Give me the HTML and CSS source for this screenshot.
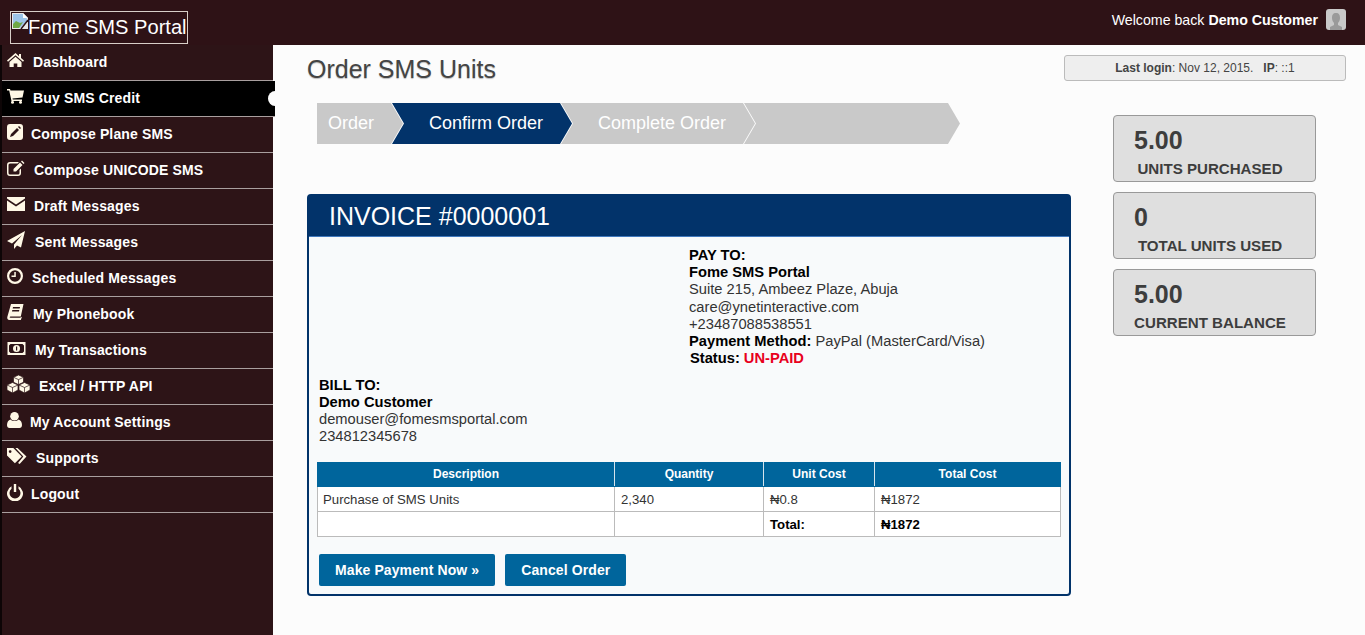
FILE: index.html
```html
<!DOCTYPE html>
<html lang="en">
<head>
    <meta charset="UTF-8">
    <title>Fome SMS Portal - Order SMS Units</title>
    <link rel="stylesheet" href="styles.css">
</head>
<body>
    <header class="topbar">
        <a class="logo" href="#">
            <svg class="broken-img" width="16" height="16" viewBox="0 0 16 16">
                <path d="M0 0h11l5 5v11H0z" fill="#e8e8e8"/>
                <path d="M1 1h9.500l4.500 4.500V8L8 15H1z" fill="#9cc4e8"/>
                <path d="M1 15v-4l3-3 4 2 3-1-4 6z" fill="#6fa845"/>
                <path d="M11 0v5h5z" fill="#fff"/>
                <path d="M16 7 9 16" stroke="#2e1216" stroke-width="1.500"/>
            </svg>
            <span>Fome SMS Portal</span>
        </a>
        <div class="welcome">
            <span>Welcome back <b>Demo Customer</b></span>
            <svg class="avatar" width="20" height="21" viewBox="0 0 20 21">
                <rect width="20" height="21" rx="3" fill="#c9c9c9"/>
                <path d="M10 4c-3 0-4 2-4 5 0 2 1 4 2 5v2l-4 2v3h12v-3l-4-2v-2c1-1 2-3 2-5 0-3-1-5-4-5z" fill="#9a9a9a"/>
            </svg>
        </div>
    </header>

    <div class="layout">
        <nav class="sidebar">
            <a class="nav-item" href="#">
                <svg width="17" height="16" viewBox="0 0 17 16"><path d="M8.500 1 0 8.500l1 1.200 7.500-6.500 7.500 6.500 1-1.200-3-2.600V2h-2v2.200z"/><path d="M8.500 4.700 2.500 10v5h4.200v-3.500h3.600V15h4.200v-5z"/></svg>
                <span>Dashboard</span>
            </a>
            <a class="nav-item active" href="#">
                <svg width="17" height="16" viewBox="0 0 17 16"><path d="M0 1h3l.5 1.500H17l-1.500 7-10 1 .3 1H15v1.500H4.500L2.200 2.500H0z"/><circle cx="5.500" cy="14.300" r="1.500"/><circle cx="13.500" cy="14.300" r="1.500"/></svg>
                <span>Buy SMS Credit</span>
            </a>
            <a class="nav-item tight" href="#">
                <svg width="16" height="16" viewBox="0 0 16 16"><path fill-rule="evenodd" d="M3 0h10a3 3 0 0 1 3 3v10a3 3 0 0 1-3 3H3a3 3 0 0 1-3-3V3a3 3 0 0 1 3-3zM10 4l-6 6-1 3 3-1 6-6zM11 3l2 2 1-1-2-2z"/></svg>
                <span>Compose Plane SMS</span>
            </a>
            <a class="nav-item" href="#">
                <svg width="18" height="16" viewBox="0 0 18 16"><path d="M3 2h9l-1.500 1.500H3A1.500 1.500 0 0 0 1.500 5v8A1.500 1.500 0 0 0 3 14.500h8a1.500 1.500 0 0 0 1.500-1.500v-3L14 8.500V13a3 3 0 0 1-3 3H3a3 3 0 0 1-3-3V5a3 3 0 0 1 3-3z"/><path d="M13 2.500 15.500 5 9 11.500H6.500V9zM14 1.500l1-1 2.500 2.500-1 1z"/></svg>
                <span>Compose UNICODE SMS</span>
            </a>
            <a class="nav-item" href="#">
                <svg width="18" height="14" viewBox="0 0 18 14"><path d="M0 0h18v1.500L9 7.500 0 1.500z"/><path d="M0 3.500 9 9.500l9-6V14H0z"/></svg>
                <span>Draft Messages</span>
            </a>
            <a class="nav-item" href="#">
                <svg width="19" height="18" viewBox="0 0 19 18"><path d="M18 0 0 10l5 2.500L15 4 7 13.500V18l3-3.500 4 2z"/></svg>
                <span>Sent Messages</span>
            </a>
            <a class="nav-item" href="#">
                <svg width="16" height="16" viewBox="0 0 16 16"><path fill-rule="evenodd" d="M8 0a8 8 0 1 1 0 16A8 8 0 0 1 8 0zm0 2.200a5.800 5.800 0 1 0 0 11.600A5.800 5.800 0 0 0 8 2.200z"/><path d="M7.300 4h1.500v5H4.500V7.500h2.800z"/></svg>
                <span>Scheduled Messages</span>
            </a>
            <a class="nav-item" href="#">
                <svg width="17" height="16" viewBox="0 0 17 16"><path fill-rule="evenodd" d="M4 0h12.500l-2.700 12.500H3.500c-1 0-1.300 1.300 0 1.300h10l.5-1 .8.400-1 2.800H2.500C.5 16 0 14.500.3 13zM6 3l-.3 1.500h7L13 3zm-.7 3L5 7.500h7l.3-1.500z"/></svg>
                <span>My Phonebook</span>
            </a>
            <a class="nav-item" href="#">
                <svg width="19" height="13" viewBox="0 0 18 13"><path fill-rule="evenodd" d="M0 0h18v13H0zM3 2 1.500 3.500v6L3 11h12l1.500-1.500v-6L15 2z"/><circle cx="9" cy="6.500" r="3.500"/><path d="M8.500 4.500h1.200v4H8.500z" fill="#2d1417"/></svg>
                <span>My Transactions</span>
            </a>
            <a class="nav-item" href="#">
                <svg width="23" height="18" viewBox="0 0 23 18" stroke="#2d1417" stroke-width="0.700">
                    <path d="M11.500 0 16.500 2.300v5l-5 2.300-5-2.300v-5z"/><path d="M6.500 2.300l5 2.300 5-2.300M11.500 4.600v5" fill="none"/>
                    <path d="M5.500 7.500 11 10v5l-5.500 3-5.500-3v-5z"/><path d="M0 10l5.500 2.500L11 10M5.500 12.500V18" fill="none"/>
                    <path d="M17.500 7.500 23 10v5l-5.500 3-5.500-3v-5z"/><path d="M12 10l5.500 2.500L23 10M17.500 12.500V18" fill="none"/>
                </svg>
                <span>Excel / HTTP API</span>
            </a>
            <a class="nav-item tight" href="#">
                <svg width="15" height="16" viewBox="0 0 15 16"><circle cx="7.500" cy="4.300" r="4.300"/><path d="M3.500 7.500c1 1 2.500 1.500 4 1.500s3-.5 4-1.500c2 .5 3.500 2.500 3.500 5.500 0 2-1 3-2.500 3h-10C1 16 0 15 0 13c0-3 1.500-5 3.500-5.500z"/></svg>
                <span>My Account Settings</span>
            </a>
            <a class="nav-item" href="#">
                <svg width="20" height="16" viewBox="0 0 19 15"><path fill-rule="evenodd" d="M0 0h6l8 8-6.500 6.500L0 7zM3 2a1.300 1.300 0 1 0 0 2.600A1.300 1.300 0 0 0 3 2z"/><path d="M8 0h2l8.500 8-6.500 7-1.500-.8L15.500 8z"/></svg>
                <span>Supports</span>
            </a>
            <a class="nav-item tight" href="#">
                <svg width="16" height="17" viewBox="0 0 16 17"><path d="M6.800 0h2.400v8H6.800z"/><path d="M4.500 2.200v2.600a5.500 5.500 0 1 0 7 0V2.200a8 8 0 1 1-7 0z"/></svg>
                <span>Logout</span>
            </a>
        </nav>

        <main class="main">
            <div class="head-row">
                <h1>Order SMS Units</h1>
                <div class="last-login"><b>Last login</b>: Nov 12, 2015. &nbsp; <b>IP</b>: ::1</div>
            </div>

            <div class="content-row">
                <div class="content">
                    <ol class="steps">
                        <li class="step step-first">Order</li>
                        <li class="step step-current">Confirm Order</li>
                        <li class="step step-third">Complete Order</li>
                        <li class="step step-last"></li>
                    </ol>

                    <section class="invoice">
                        <h2 class="invoice-title">INVOICE #0000001</h2>
                        <div class="invoice-body">
                            <div class="pay-to">
                                <b>PAY TO:</b><br>
                                <b>Fome SMS Portal</b><br>
                                Suite 215, Ambeez Plaze, Abuja<br>
                                care@ynetinteractive.com<br>
                                +23487088538551<br>
                                <b>Payment Method:</b> PayPal (MasterCard/Visa)<br>
                                <b class="status">Status: <span class="unpaid">UN-PAID</span></b>
                            </div>
                            <div class="bill-to">
                                <b>BILL TO:</b><br>
                                <b>Demo Customer</b><br>
                                demouser@fomesmsportal.com<br>
                                234812345678
                            </div>

                            <table class="items">
                                <thead>
                                    <tr>
                                        <th class="col-desc">Description</th>
                                        <th class="col-qty">Quantity</th>
                                        <th class="col-unit">Unit Cost</th>
                                        <th>Total Cost</th>
                                    </tr>
                                </thead>
                                <tbody>
                                    <tr>
                                        <td>Purchase of SMS Units</td>
                                        <td>2,340</td>
                                        <td>₦0.8</td>
                                        <td>₦1872</td>
                                    </tr>
                                    <tr>
                                        <td></td>
                                        <td></td>
                                        <td><b>Total:</b></td>
                                        <td><b>₦1872</b></td>
                                    </tr>
                                </tbody>
                            </table>

                            <div class="actions">
                                <a class="btn" href="#">Make Payment Now »</a>
                                <a class="btn" href="#">Cancel Order</a>
                            </div>
                        </div>
                    </section>
                </div>

                <aside class="stats">
                    <div class="stat">
                        <div class="stat-num">5.00</div>
                        <div class="stat-label">UNITS PURCHASED</div>
                    </div>
                    <div class="stat">
                        <div class="stat-num">0</div>
                        <div class="stat-label">TOTAL UNITS USED</div>
                    </div>
                    <div class="stat">
                        <div class="stat-num">5.00</div>
                        <div class="stat-label">CURRENT BALANCE</div>
                    </div>
                </aside>
            </div>
        </main>
    </div>
</body>
</html>
```

FILE: styles.css
```css
* {
    box-sizing: border-box;
}
html, body {
    height: 100%;
}
body {
    margin: 0;
    font-family: "Liberation Sans", Arial, sans-serif;
    background-color: #fcfcfc;
    color: #222;
    overflow: hidden;
}
a {
    text-decoration: none;
}

/* top bar */
.topbar {
    height: 45px;
    background-color: #2e1216;
    display: flex;
    justify-content: space-between;
    align-items: flex-start;
    padding: 11px 19px 0 10px;
}
.logo {
    display: flex;
    width: 178px;
    height: 33px;
    border: 1px solid #d8cfc8;
    color: #fff;
    font-size: 20.100px;
    line-height: 31px;
    white-space: nowrap;
}
.broken-img {
    flex: none;
    margin: 1px 0 0 1px;
}
.welcome {
    display: flex;
    align-items: center;
    gap: 8px;
    margin-top: -2px;
    color: #fff;
    font-size: 14.200px;
}

/* side menu */
.layout {
    display: flex;
    height: calc(100% - 45px);
}
.sidebar {
    flex: none;
    width: 273px;
    background-color: #2d1417;
    border-left: 2px solid #0d0506;
}
.nav-item {
    position: relative;
    display: flex;
    align-items: center;
    height: 36px;
    padding: 0 0 2px 5px;
    border-bottom: 1px solid #a99f9f;
    color: #fff;
    font-size: 14px;
    font-weight: bold;
    letter-spacing: 0.15px;
}
.nav-item svg {
    flex: none;
    margin-right: 9px;
    margin-top: -3px;
    fill: #fff8e6;
}
.nav-item.tight svg {
    margin-right: 8px;
}
.nav-item.active {
    margin-right: -2px;
    background-color: #000;
}
.nav-item.active::after {
    content: "";
    position: absolute;
    right: 0;
    top: 10px;
    width: 7px;
    height: 15px;
    background-color: #fcfcfc;
    border-radius: 100% 0 0 100% / 50% 0 0 50%;
}

/* main area */
.main {
    flex: 1;
    padding: 10px 19px 0 34px;
}
.head-row {
    display: flex;
    justify-content: space-between;
    align-items: flex-start;
    height: 48px;
}
h1 {
    margin: 0;
    font-size: 25px;
    font-weight: normal;
    line-height: 29px;
    color: #444;
    text-shadow: 0 1px 1px #bbb;
}
.last-login {
    width: 282px;
    height: 26px;
    background-color: #eee;
    border: 1px solid #bbb;
    border-radius: 3px;
    color: #444;
    font-size: 12px;
    line-height: 24px;
    text-align: center;
}
.content-row {
    display: flex;
    justify-content: space-between;
    padding-right: 30px;
}
.content {
    width: 764px;
}

/* order steps */
.steps {
    display: flex;
    list-style: none;
    margin: 0 0 50px 10px;
    padding: 0;
    height: 41px;
}
.step {
    height: 41px;
    margin-left: -11px;
    background-color: #c9c9c9;
    color: #fff;
    font-size: 18px;
    line-height: 40px;
    clip-path: polygon(0 0, calc(100% - 12px) 0, 100% 50%, calc(100% - 12px) 100%, 0 100%, 12px 50%);
}
.step-first {
    width: 86px;
    margin-left: 0;
    padding-left: 11px;
    clip-path: polygon(0 0, calc(100% - 12px) 0, 100% 50%, calc(100% - 12px) 100%, 0 100%);
}
.step-current {
    width: 180px;
    padding-left: 37px;
    background-color: #02336a;
}
.step-third {
    width: 194px;
    padding-left: 37px;
}
.step-last {
    width: 216px;
}

/* invoice */
.invoice {
    border: 2px solid #02336a;
    border-radius: 4px;
    background-color: #f8fafb;
    height: 402px;
}
.invoice-title {
    margin: 0;
    height: 41px;
    padding-left: 20px;
    background-color: #02336a;
    border-bottom: 1px solid #3f78bd;
    color: #fff;
    font-size: 25px;
    font-weight: normal;
    line-height: 41px;
}
.invoice-body {
    padding: 10px 8px 0 8px;
    font-size: 14.700px;
    line-height: 17px;
    color: #333;
}
.invoice-body b {
    color: #000;
}
.pay-to {
    margin-left: 372px;
    line-height: 17.200px;
}
.status {
    margin-left: 1px;
}
.invoice-body .unpaid {
    color: #e8001c;
}
.bill-to {
    margin: 10px 0 17px 2px;
}
.items {
    width: 744px;
    border-collapse: collapse;
    font-size: 13.200px;
    background-color: #fff;
    table-layout: fixed;
}
.items th {
    height: 24px;
    background-color: #00659c;
    border: 1px solid #00659c;
    border-right-color: #d5e3ec;
    color: #fff;
    font-size: 12px;
    font-weight: bold;
}
.items th:last-child {
    border-right-color: #00659c;
}
.items td {
    height: 25px;
    padding: 0 5px;
    border: 1px solid #bbb;
    color: #333;
}
.items td + td {
    padding-left: 6px;
}
.col-desc {
    width: 297px;
}
.col-qty {
    width: 149px;
}
.col-unit {
    width: 111px;
}
.actions {
    display: flex;
    gap: 10px;
    margin: 17px 0 0 2px;
}
.btn {
    height: 32px;
    padding: 0 16px;
    background-color: #00659c;
    border-radius: 2px;
    color: #fff;
    font-size: 14px;
    font-weight: bold;
    line-height: 32px;
    letter-spacing: 0.1px;
}

/* balance cards */
.stats {
    width: 203px;
    margin-top: 12px;
    display: flex;
    flex-direction: column;
    gap: 10px;
}
.stat {
    height: 67px;
    padding: 10px 0 0 20px;
    background-color: #dfdfdf;
    border: 1px solid #999;
    border-radius: 4px;
    color: #3d3d3d;
    font-weight: bold;
}
.stat-num {
    font-size: 25px;
    line-height: 29px;
}
.stat-label {
    width: 152px;
    font-size: 15.100px;
    line-height: 18px;
    margin-top: 5px;
    text-align: center;
    white-space: nowrap;
}
```
